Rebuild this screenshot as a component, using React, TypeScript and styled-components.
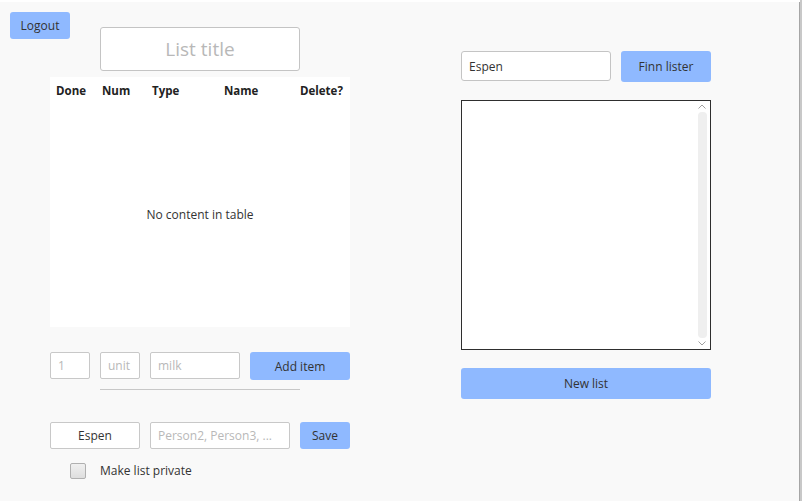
import React from "react";
import styled, { createGlobalStyle } from "styled-components";

const Global = createGlobalStyle`
  html, body { margin: 0; padding: 0; background: #ffffff; }
  body { font-family: "Open Sans", "Noto Sans", sans-serif; font-size: 12px; color: #333; }
  * { box-sizing: border-box; }
`;

const Page = styled.div`
  width: 802px;
  height: 501px;
  padding-top: 2px;
  display: flex;
  background: #ffffff;
`;

const Canvas = styled.div`
  width: 800px;
  height: 499px;
  background: #f9f9f9;
  display: flex;
  border-right: 1px solid #a6a6a6;
`;

const EdgeStrip = styled.div`
  width: 2px;
  margin-top: -2px;
  background: #c8c8c8;
`;

const LeftCol = styled.div`
  width: 350px;
  display: flex;
  flex-direction: column;
`;

const HeaderRow = styled.div`
  display: flex;
  align-items: flex-start;
  padding-left: 10px;
`;

const Button = styled.button<{ $w: number; $h: number }>`
  width: ${(p) => p.$w}px;
  height: ${(p) => p.$h}px;
  background: #8fb9ff;
  border: none;
  border-radius: 3px;
  font-family: inherit;
  font-size: 12px;
  color: #333;
  padding: 0;
  flex-shrink: 0;
`;

const LogoutButton = styled(Button)`
  margin-top: 10px;
`;

const TitleInput = styled.input`
  margin-left: 30px;
  margin-top: 25px;
  width: 200px;
  height: 44px;
  border: 1px solid #c4c4c4;
  border-radius: 3px;
  background: #fff;
  font-family: inherit;
  font-size: 19px;
  text-align: center;
  color: #333;
  &::placeholder { color: #b8b8b8; }
`;

const Table = styled.div`
  margin-left: 50px;
  margin-top: 6px;
  width: 300px;
  height: 250px;
  background: #fff;
  display: flex;
  flex-direction: column;
`;

const HeadRow = styled.div`
  display: grid;
  grid-template-columns: 46px 50px 72px 76px 1fr;
  padding: 6px 0 0 6px;
  height: 26px;
  font-weight: 700;
  font-size: 11.5px;
  color: #222;
`;

const Empty = styled.div`
  flex: 1;
  display: flex;
  align-items: center;
  justify-content: center;
  padding-top: 0;
  padding-bottom: 2px;
  color: #333;
`;

const FormRow = styled.div<{ $top: number }>`
  display: flex;
  align-items: flex-start;
  gap: 10px;
  margin-left: 50px;
  margin-top: ${(p) => p.$top}px;
`;

const Field = styled.input<{ $w: number; $center?: boolean }>`
  width: ${(p) => p.$w}px;
  height: 27px;
  border: 1px solid #c8c8c8;
  border-radius: 2px;
  background: #fff;
  font-family: inherit;
  font-size: 12px;
  color: #333;
  padding: 0 7px;
  text-align: ${(p) => (p.$center ? "center" : "left")};
  &::placeholder { color: #b8b8b8; }
`;

const Separator = styled.div`
  margin-left: 100px;
  margin-top: 9px;
  width: 200px;
  height: 1px;
  background: #c8c8c8;
`;

const CheckRow = styled.label`
  display: flex;
  align-items: center;
  margin-left: 70px;
  margin-top: 13px;
  gap: 14px;
  color: #333;
`;

const CheckBox = styled.span`
  width: 16px;
  height: 16px;
  border: 1px solid #b0b0b0;
  border-radius: 2px;
  background: linear-gradient(#f0f0f0, #dedede);
`;

const RightCol = styled.div`
  margin-left: 111px;
  width: 250px;
  display: flex;
  flex-direction: column;
`;

const SearchRow = styled.div`
  display: flex;
  gap: 10px;
  margin-top: 49px;
`;

const SearchInput = styled.input`
  width: 150px;
  height: 30px;
  border: 1px solid #c4c4c4;
  border-radius: 3px;
  background: #fff;
  font-family: inherit;
  font-size: 12px;
  color: #333;
  padding: 0 7px;
`;

const ListBox = styled.div`
  margin-top: 18px;
  width: 250px;
  height: 250px;
  border: 1px solid #2e2e2e;
  background: #fff;
  display: flex;
  justify-content: flex-end;
  padding: 2px 3px 2px 0;
`;

const ScrollBar = styled.div`
  width: 10px;
  display: flex;
  flex-direction: column;
  align-items: center;
`;

const Track = styled.div`
  flex: 1;
  width: 9px;
  margin: 2px 0;
  background: #efefef;
  border-radius: 4px;
`;

const NewListButton = styled(Button)`
  margin-top: 18px;
`;

const Chevron = ({ up }: { up?: boolean }) => (
  <svg width="10" height="7" viewBox="0 0 10 7">
    <path
      d={up ? "M1.5 5.5 L5 2 L8.5 5.5" : "M1.5 1.5 L5 5 L8.5 1.5"}
      fill="none"
      stroke="#a0a0a0"
      strokeWidth="1"
    />
  </svg>
);

export default function App() {
  return (
    <>
      <Global />
      <Page>
        <Canvas>
          <LeftCol>
            <HeaderRow>
              <LogoutButton $w={60} $h={27}>Logout</LogoutButton>
              <TitleInput placeholder="List title" />
            </HeaderRow>
            <Table>
              <HeadRow>
                <span>Done</span>
                <span>Num</span>
                <span>Type</span>
                <span>Name</span>
                <span>Delete?</span>
              </HeadRow>
              <Empty>No content in table</Empty>
            </Table>
            <FormRow $top={25}>
              <Field $w={40} placeholder="1" />
              <Field $w={40} placeholder="unit" />
              <Field $w={90} placeholder="milk" />
              <Button $w={100} $h={28}>Add item</Button>
            </FormRow>
            <Separator />
            <FormRow $top={32}>
              <Field $w={90} $center defaultValue="Espen" />
              <Field $w={140} placeholder="Person2, Person3, ..." />
              <Button $w={50} $h={27}>Save</Button>
            </FormRow>
            <CheckRow>
              <CheckBox />
              <span>Make list private</span>
            </CheckRow>
          </LeftCol>
          <RightCol>
            <SearchRow>
              <SearchInput defaultValue="Espen" />
              <Button $w={90} $h={31}>Finn lister</Button>
            </SearchRow>
            <ListBox>
              <ScrollBar>
                <Chevron up />
                <Track />
                <Chevron />
              </ScrollBar>
            </ListBox>
            <NewListButton $w={250} $h={31}>New list</NewListButton>
          </RightCol>
        </Canvas>
        <EdgeStrip />
      </Page>
    </>
  );
}
